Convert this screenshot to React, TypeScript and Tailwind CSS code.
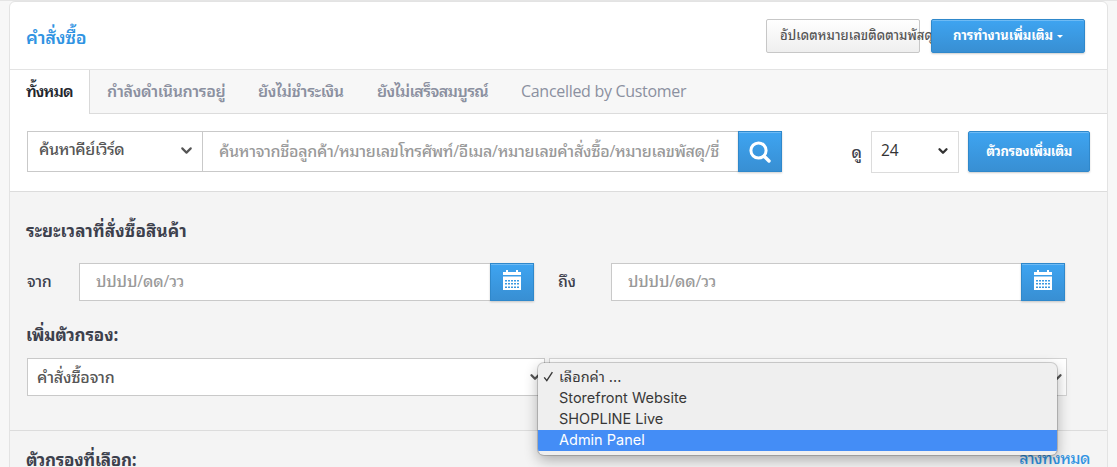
import React from 'react';
import { ChevronDown } from 'lucide-react';

const blue =
  'border border-[#2f88cb] bg-linear-to-b from-[#3ea4f1] to-[#388fd3] text-white shadow-[inset_0_1px_0_rgba(255,255,255,0.25),0_1px_2px_rgba(0,0,0,0.2)]';

const tabs = [
  { label: 'กำลังดำเนินการอยู่', className: 'w-[151px] tracking-[-0.35px]' },
  { label: 'ยังไม่ชำระเงิน', className: 'w-[119px] tracking-[-0.4px]' },
  { label: 'ยังไม่เสร็จสมบูรณ์', className: 'w-[144px] tracking-[-0.65px]' },
  { label: 'Cancelled by Customer', className: 'w-[170px] font-normal tracking-[-0.3px]' },
];

const options = ['เลือกค่า ...', 'Storefront Website', 'SHOPLINE Live', 'Admin Panel'];

const CalendarIcon = () => (
  <svg width="20" height="21" viewBox="0 0 20 21" fill="#fff">
    <path d="M1 2h3V0h2v2h8V0h2v2h3v3H1z" />
    <path
      fillRule="evenodd"
      d="M1 6.5h18V20H1zM3 10v1.5h2v-1.5zM6 10v1.5h2v-1.5zM9 10v1.5h2v-1.5zM12 10v1.5h2v-1.5zM15 10v1.5h2v-1.5zM3 13v1.5h2v-1.5zM6 13v1.5h2v-1.5zM9 13v1.5h2v-1.5zM12 13v1.5h2v-1.5zM15 13v1.5h2v-1.5zM3 16.5v1.5h2v-1.5zM6 16.5v1.5h2v-1.5zM9 16.5v1.5h2v-1.5zM12 16.5v1.5h2v-1.5zM15 16.5v1.5h2v-1.5z"
    />
  </svg>
);

const SearchIcon = () => (
  <svg width="22" height="22" viewBox="0 0 22 22" fill="none" stroke="#fff">
    <circle cx="9.5" cy="9.5" r="7.6" strokeWidth="3" />
    <path d="m15.2 15.2 4.8 4.8" strokeWidth="3.4" strokeLinecap="round" />
  </svg>
);

const CheckIcon = () => (
  <svg width="11" height="11" viewBox="0 0 11 11" fill="none" stroke="#383838">
    <path d="M1.2 6.4 3.8 9.6 9.4 1.2" strokeWidth="1.4" />
  </svg>
);

const DateField = ({ className }: { className: string }) => (
  <div className={`flex h-[38px] ${className}`}>
    <div className="flex-1 border border-r-0 border-[#c9c9c9] bg-white pl-4 text-base leading-[35px] font-medium tracking-[-0.15px] text-[#999]">
      ปปปป/ดด/วว
    </div>
    <button className={`flex w-11 justify-center pt-[6px] ${blue}`}>
      <CalendarIcon />
    </button>
  </div>
);

const Header = () => (
  <div className="flex h-[68px] border-b border-[#e3e3e3] pt-[17px] pr-[22px] pl-4">
    <h1 className="flex-1 text-lg leading-9 font-semibold tracking-[-0.2px] text-[#3093e2]">
      คำสั่งซื้อ
    </h1>
    <button className="h-[34px] w-[154px] rounded-[2px] border border-[#c7c7c7] bg-linear-to-b from-white to-[#efefef] pl-[13px] text-left text-[13px] font-medium tracking-[0.05px] whitespace-nowrap text-[#555]">
      อัปเดตหมายเลขติดตามพัสดุ
    </button>
    <button
      className={`relative ml-[11px] flex h-[34px] w-[154px] items-center justify-center gap-1 rounded-[2px] text-[13px] font-bold tracking-[-0.1px] ${blue}`}
    >
      การทำงานเพิ่มเติม
      <span className="border-x-[3px] border-t-[3px] border-x-transparent border-t-white" />
    </button>
  </div>
);

const Tabs = () => (
  <div className="flex h-11 text-base leading-[43px] font-semibold whitespace-nowrap">
    <div className="w-20 border-r border-[#d9d9d9] bg-white pl-4 tracking-[-0.9px] text-[#23262d]">
      ทั้งหมด
    </div>
    <div className="flex flex-1 border-b border-[#dcdcdc] bg-[#f7f7f7] pl-[17px] text-[#8b90a0]">
      {tabs.map((tab) => (
        <div key={tab.label} className={tab.className}>
          {tab.label}
        </div>
      ))}
    </div>
  </div>
);

const SearchRow = () => (
  <div className="flex h-[78px] border-b border-[#dcdcdc] pt-[17px] pr-[17px] pl-[17px]">
    <div className="flex h-[41px] w-[176px] justify-between border border-[#c9c9c9] pr-[7px] pl-[11px] text-base leading-[34px] font-medium tracking-[-0.4px] text-[#555]">
      ค้นหาคีย์เวิร์ด
      <ChevronDown size={17} strokeWidth={3} className="mt-[10px]" />
    </div>
    <div className="h-[41px] w-[535px] border-y border-[#c9c9c9] pr-[18px] pl-4 text-base leading-[39px] font-medium text-[#999]">
      <div className="overflow-hidden tracking-[-0.3px] whitespace-nowrap">
        ค้นหาจากชื่อลูกค้า/หมายเลขโทรศัพท์/อีเมล/หมายเลขคำสั่งซื้อ/หมายเลขพัสดุ/ชื่อ
      </div>
    </div>
    <button className={`flex h-[41px] w-11 items-center justify-center ${blue}`}>
      <SearchIcon />
    </button>
    <div className="ml-auto text-base leading-[42px] font-medium text-[#3c404c]">ดู</div>
    <div className="ml-[9px] flex h-[42px] w-[88px] items-center justify-between border border-[#dcdcdc] pr-2 pb-[2px] pl-[9px] text-[15.5px] text-[#333]">
      24
      <ChevronDown size={14} strokeWidth={4} />
    </div>
    <button
      className={`ml-[9px] h-[41px] w-[122px] rounded-[2px] text-[13px] font-bold tracking-[-0.35px] ${blue}`}
    >
      ตัวกรองเพิ่มเติม
    </button>
  </div>
);

const OptionMenu = () => (
  <div className="absolute top-[362px] left-[538px] h-[92px] w-[519px] overflow-hidden rounded-md bg-[#efefef] pt-1 font-['Inter','Noto_Sans_Thai_Looped','Loma','Waree','Noto_Sans_Thai',sans-serif] text-[14.5px] text-[#383838] shadow-[0_0_0_1px_rgba(0,0,0,0.17),0_5px_14px_rgba(0,0,0,0.3)]">
    {options.map((option, i) => (
      <div
        key={option}
        className={`h-[21px] pl-[5px] ${i === 3 ? 'bg-[#448df6] text-white' : ''}`}
      >
        <div className="flex h-[19px] items-center">
          <span className="w-4">{i === 0 && <CheckIcon />}</span>
          {option}
        </div>
      </div>
    ))}
  </div>
);

const Filters = () => (
  <div className="h-[275px] bg-[#f4f4f4] text-[#3c404c]">
    <div className="h-[239px] border-b border-[#dcdcdc] pl-[17px]">
      <h2 className="-ml-px pt-[26px] text-[17px] leading-[26px] font-bold tracking-[0.17px]">
        ระยะเวลาที่สั่งซื้อสินค้า
      </h2>
      <div className="mt-[19px] flex text-base leading-[37px] font-medium">
        <div className="w-[52px] tracking-[-0.4px]">จาก</div>
        <DateField className="w-[455px]" />
        <div className="w-[77px] pl-6 tracking-[-0.4px]">ถึง</div>
        <DateField className="w-[454px]" />
      </div>
      <h2 className="mt-[21px] -ml-px text-[17px] leading-[26px] font-bold tracking-[-0.15px]">
        เพิ่มตัวกรอง:
      </h2>
      <div className="mt-[10px] flex gap-1 text-base text-[#555]">
        <div className="flex h-[38px] w-[518px] items-center justify-between border border-[#c9c9c9] bg-white pr-[2px] pl-[9px] font-medium tracking-[-0.2px]">
          คำสั่งซื้อจาก
          <ChevronDown size={14} strokeWidth={4} />
        </div>
        <div className="flex h-[38px] w-[518px] items-center justify-end border border-[#d3d3d3] bg-white pr-[2px]">
          <ChevronDown size={14} strokeWidth={4} />
        </div>
      </div>
    </div>
    <div className="flex justify-between pt-4 pr-[17px] pl-4">
      <h2 className="text-[17px] leading-[26px] font-bold tracking-[-0.25px]">ตัวกรองที่เลือก:</h2>
      <a className="text-base leading-[23px] font-medium tracking-[-0.5px] text-[#3093e2]">ล้างทั้งหมด</a>
    </div>
  </div>
);

const App = () => {
  return (
    <div className="relative h-[467px] overflow-hidden border-t border-[#e5e5e5] bg-[#f7f7f7] px-[9px] font-['Open_Sans','Noto_Sans_Thai_Looped','Loma','Waree','Noto_Sans_Thai',sans-serif]">
      <div className="rounded-t-md border border-[#e3e3e3] bg-white">
        <Header />
        <Tabs />
        <SearchRow />
        <Filters />
      </div>
      <OptionMenu />
    </div>
  );
};

export default App;
